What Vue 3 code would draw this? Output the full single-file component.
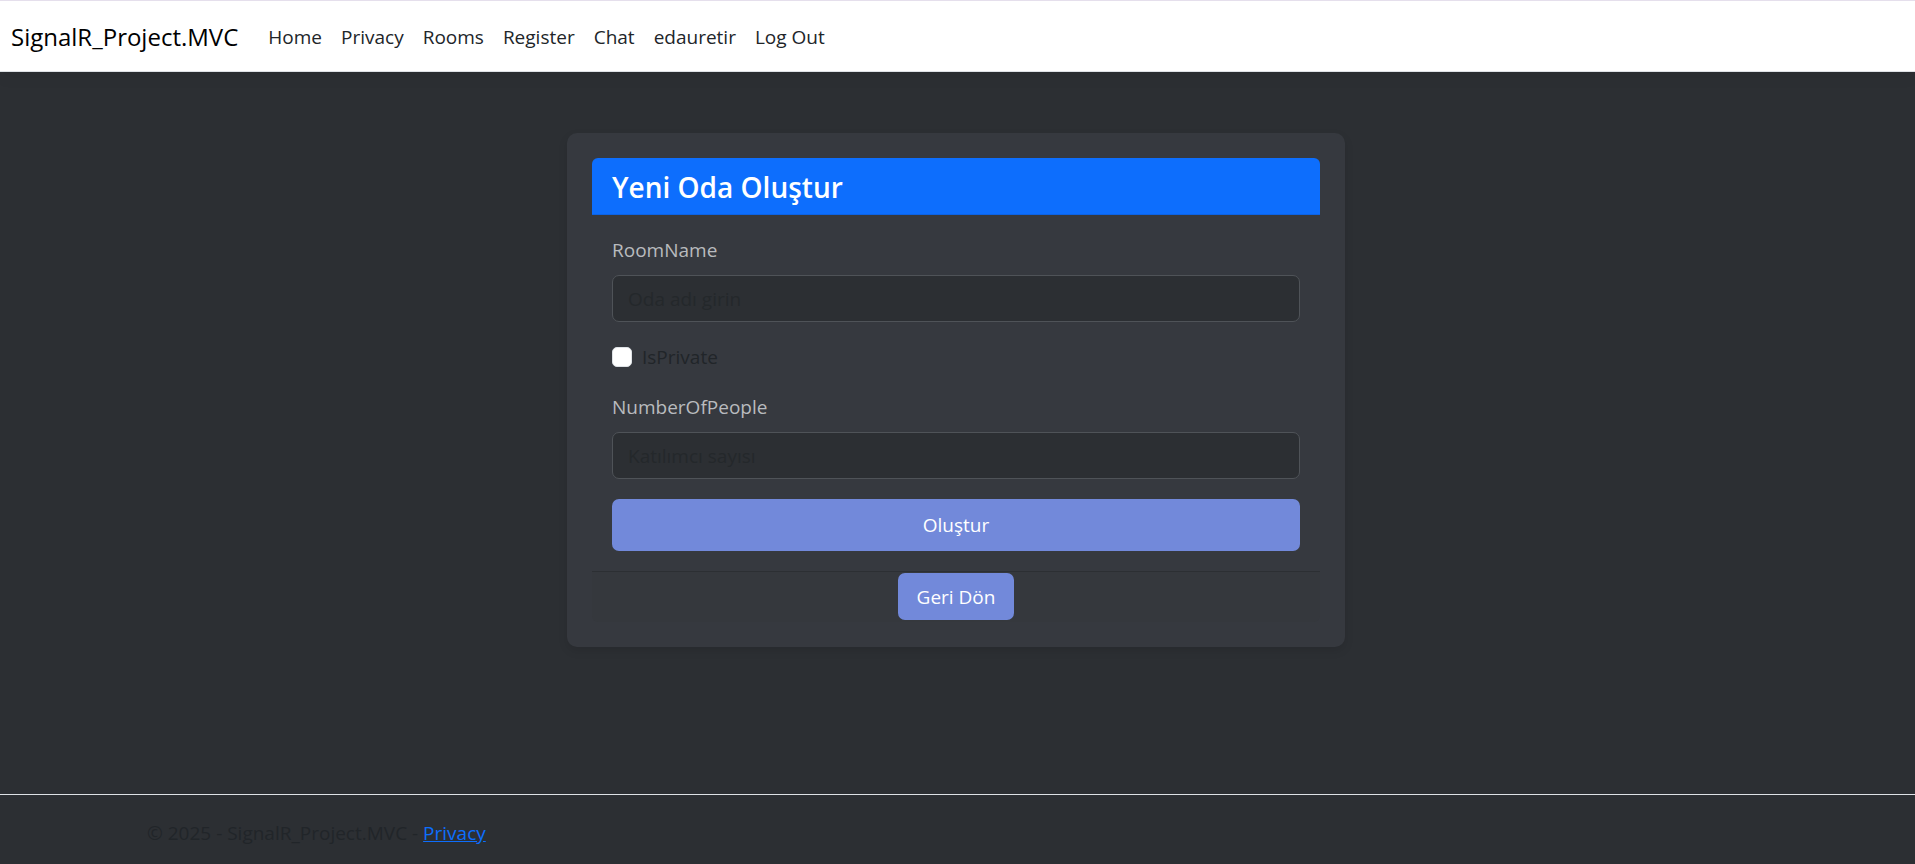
<script setup>
import { ref } from 'vue'

const links = ['Home', 'Privacy', 'Rooms', 'Register', 'Chat', 'edauretir', 'Log Out']
const roomName = ref('')
const isPrivate = ref(false)
const people = ref('')
</script>

<template>
  <div class="page">
    <header class="site-header">
      <nav class="navbar">
        <a class="brand" href="#">SignalR_Project.MVC</a>
        <ul class="nav-list">
          <li v-for="link in links" :key="link">
            <a class="nav-link" href="#">{{ link }}</a>
          </li>
        </ul>
      </nav>
    </header>

    <main class="content">
      <section class="panel">
        <h3 class="panel-title">Yeni Oda Oluştur</h3>
        <form class="panel-body" @submit.prevent>
          <div class="field">
            <label for="room-name">RoomName</label>
            <input id="room-name" v-model="roomName" type="text" placeholder="Oda adı girin" />
          </div>
          <div class="check">
            <input id="is-private" v-model="isPrivate" type="checkbox" />
            <label for="is-private">IsPrivate</label>
          </div>
          <div class="field">
            <label for="people">NumberOfPeople</label>
            <input id="people" v-model="people" type="text" inputmode="numeric" placeholder="Katılımcı sayısı" />
          </div>
          <button class="submit" type="submit">Oluştur</button>
        </form>
        <div class="panel-footer">
          <a class="back" href="#">Geri Dön</a>
        </div>
      </section>
    </main>

    <footer class="site-footer">
      <p>© 2025 - SignalR_Project.MVC - <a href="#">Privacy</a></p>
    </footer>
  </div>
</template>

<style>
body {
  margin: 0;
  background: #2c2f33;
}
</style>

<style scoped>
.page {
  display: flex;
  flex-direction: column;
  min-height: 100vh;
  box-sizing: border-box;
  background: #2c2f33;
  color: #212529;
  font-family: "Open Sans", "Noto Sans", sans-serif;
  font-size: 19px;
  line-height: 30px;
}

.page * {
  box-sizing: border-box;
}

.site-header {
  height: 72px;
  display: flex;
  align-items: center;
  padding: 2px 11px 0;
  background: #fff;
  border-top: 1px solid #e5dfec;
  border-bottom: 1px solid #dee2e6;
  box-shadow: 0 5px 15px rgba(0, 0, 0, 0.05);
}

.navbar {
  display: flex;
  align-items: center;
  gap: 30px;
}

.brand {
  color: #000;
  font-size: 24px;
  text-decoration: none;
}

.nav-list {
  display: flex;
  gap: 19px;
  margin: 0;
  padding: 0;
  list-style: none;
}

.nav-link {
  color: #212529;
  text-decoration: none;
}

.content {
  flex: 1;
  padding: 61px 23px 40px 20px;
}

.panel {
  width: 100%;
  max-width: 778px;
  margin: 0 auto;
  padding: 25px;
  border-radius: 10px;
  background: #36393f;
  box-shadow: 0 4px 10px rgba(0, 0, 0, 0.1);
}

.panel-title {
  margin: 0;
  padding: 11px 20px 9px;
  border-bottom: 1px solid #0c63e4;
  border-radius: 6px 6px 0 0;
  background: #0d6efd;
  color: #fff;
  font-size: 28px;
  font-weight: 600;
  line-height: 36px;
}

.panel-body {
  display: flex;
  flex-direction: column;
  gap: 20px;
  padding: 20px;
}

.field {
  display: flex;
  flex-direction: column;
  gap: 10px;
}

.field label {
  color: #b9bbbe;
}

.field input {
  width: 100%;
  height: 47px;
  padding: 1px 15px 0;
  border: 1px solid #4f5358;
  border-radius: 7px;
  outline: none;
  background: #2c2f33;
  color: #fff;
  font: inherit;
}

.field input::placeholder {
  color: #24282b;
  opacity: 1;
}

.check {
  display: flex;
  align-items: center;
  gap: 10px;
}

.check input {
  appearance: none;
  width: 20px;
  height: 20px;
  margin: 0;
  border: 1px solid #dee2e6;
  border-radius: 5px;
  background: #fff;
}

.check input:checked {
  background: #0d6efd;
}

.submit,
.back {
  border: 0;
  border-radius: 7px;
  background: #7289da;
  color: #fff;
  font: inherit;
  text-align: center;
  text-decoration: none;
  cursor: pointer;
}

.submit {
  height: 52px;
  padding: 0 20px;
}

.panel-footer {
  display: flex;
  justify-content: center;
  padding: 1px 0 2px;
  border-top: 1px solid #2c2f33;
  border-radius: 0 0 6px 6px;
  background: #35383d;
}

.back {
  padding: 9px 19px 8px;
}

.site-footer {
  height: 70px;
  padding: 23px 147px 0;
  border-top: 1px solid #dee2e6;
}

.site-footer p {
  margin: 0;
}

.site-footer a {
  color: #0d6efd;
}
</style>
